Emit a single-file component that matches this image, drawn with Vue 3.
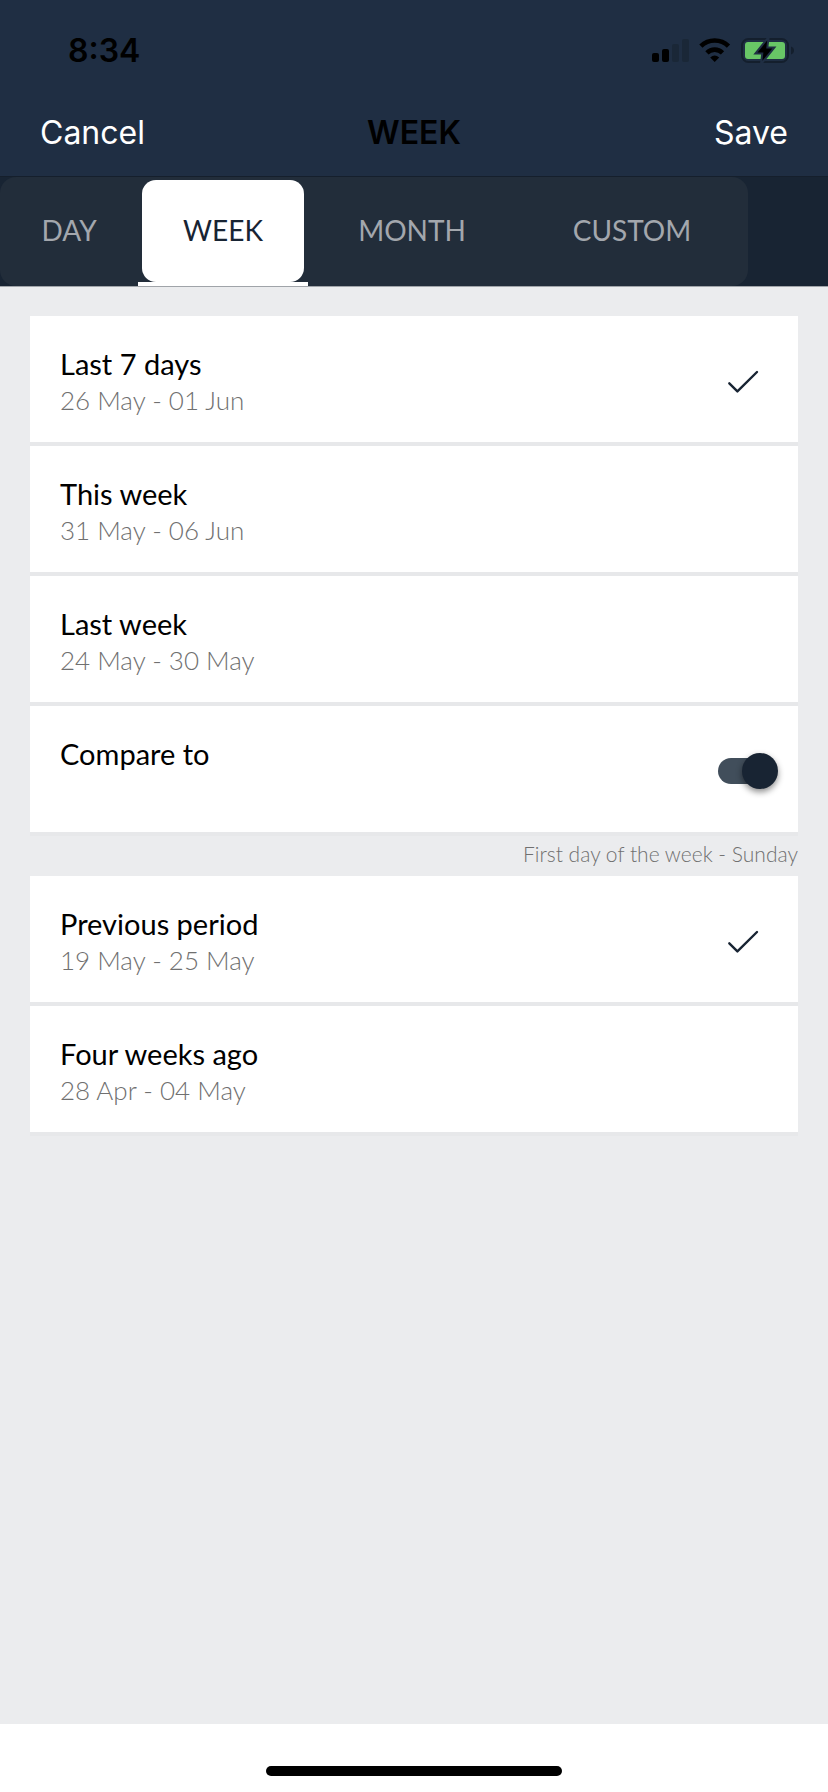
<script setup>
import { ref } from 'vue'

const tabs = ['Day', 'Week', 'Month', 'Custom']
const activeTab = ref('Week')

const periods = [
  { id: 'last7', title: 'Last 7 days', range: '26 May - 01 Jun' },
  { id: 'this', title: 'This week', range: '31 May - 06 Jun' },
  { id: 'last', title: 'Last week', range: '24 May - 30 May' },
]
const comparisons = [
  { id: 'previous', title: 'Previous period', range: '19 May - 25 May' },
  { id: 'four', title: 'Four weeks ago', range: '28 Apr - 04 May' },
]

const period = ref('last7')
const comparison = ref('previous')
const compare = ref(true)
</script>

<template>
  <div class="screen">
    <header class="header">
      <div class="status">
        <span class="clock">8:34</span>
        <div class="indicators">
          <svg width="37" height="25" viewBox="0 0 37 25" aria-hidden="true">
            <rect x="0" y="15" width="7" height="9" rx="2" />
            <rect x="10" y="11" width="7" height="13" rx="2" />
            <rect class="dim" x="20" y="6" width="7" height="18" rx="2" />
            <rect class="dim" x="30" y="1" width="7" height="23" rx="2" />
          </svg>
          <svg width="32" height="25" viewBox="0 0 32 25" aria-hidden="true">
            <path class="wave" d="M1.9 8.2A19.5 19.5 0 0 1 29.5 8.2" />
            <path class="wave" d="M7.9 14.9A11 11 0 0 1 23.5 14.9" />
            <path d="M11.2 19.5Q15.7 15.3 20.2 19.5L15.7 24Z" />
          </svg>
          <svg width="53" height="25" viewBox="0 0 53 25" aria-hidden="true">
            <rect class="shell" x="1" y="1" width="46" height="23" rx="6.5" />
            <path class="nub" d="M50 8.5Q53 9.6 53 12.5T50 16.5Z" />
            <rect class="charge" x="4" y="4" width="40" height="17" rx="3" />
            <path class="bolt" d="M26.2 2.5L16.5 14.6H22.4L21.4 22.8L31.3 10.4H25.2Z" />
          </svg>
        </div>
      </div>
      <nav class="nav">
        <button type="button" class="action">Cancel</button>
        <h1 class="heading">WEEK</h1>
        <button type="button" class="action end">Save</button>
      </nav>
    </header>

    <div class="tabbar">
      <div class="tabs" role="tablist">
        <button
          v-for="tab in tabs"
          :key="tab"
          type="button"
          role="tab"
          class="tab"
          :class="{ active: tab === activeTab }"
          :aria-selected="tab === activeTab"
          @click="activeTab = tab"
        >
          <span class="pill">{{ tab.toUpperCase() }}</span>
        </button>
      </div>
    </div>

    <main class="content">
      <label v-for="p in periods" :key="p.id" class="row">
        <span class="text">
          <span class="title">{{ p.title }}</span>
          <span class="range">{{ p.range }}</span>
        </span>
        <span class="choice">
          <input v-model="period" type="radio" name="period" :value="p.id" />
          <svg v-if="period === p.id" width="32" height="28" viewBox="0 0 32 28" aria-hidden="true">
            <path class="check" d="M2.3 16.3L10.4 24.4L30 5" />
          </svg>
        </span>
      </label>

      <label class="row switch-row">
        <span class="text">
          <span class="title">Compare to</span>
        </span>
        <input v-model="compare" class="switch" type="checkbox" role="switch" />
      </label>

      <p class="note">First day of the week - Sunday</p>

      <label v-for="c in comparisons" :key="c.id" class="row">
        <span class="text">
          <span class="title">{{ c.title }}</span>
          <span class="range">{{ c.range }}</span>
        </span>
        <span class="choice">
          <input v-model="comparison" type="radio" name="comparison" :value="c.id" />
          <svg v-if="comparison === c.id" width="32" height="28" viewBox="0 0 32 28" aria-hidden="true">
            <path class="check" d="M2.3 16.3L10.4 24.4L30 5" />
          </svg>
        </span>
      </label>
    </main>

    <footer class="footer"><div class="home"></div></footer>
  </div>
</template>

<style>
body {
  margin: 0;
}
</style>

<style scoped>
.screen {
  display: flex;
  flex-direction: column;
  min-height: 100vh;
  background: #ebecee;
  font-family: Lato, "Liberation Sans", sans-serif;
}
button {
  padding: 0;
  border: 0;
  background: none;
  font: inherit;
  cursor: pointer;
}
.header {
  background: #1f2e43;
  border-bottom: 1px solid #151f2c;
  font-family: Inter, "Liberation Sans", sans-serif;
}
.status {
  display: flex;
  align-items: center;
  justify-content: space-between;
  box-sizing: border-box;
  height: 88px;
  padding: 12px 34px 0 68px;
}
.clock {
  font-size: 32px;
  font-weight: 600;
}
.indicators {
  display: flex;
  gap: 10px;
}
.indicators svg {
  display: block;
}
.dim {
  fill: #1a2737;
}
.wave {
  fill: none;
  stroke: #000;
  stroke-width: 4.6;
}
.shell {
  fill: none;
  stroke: #141f2d;
  stroke-width: 2;
}
.nub {
  fill: #141f2d;
}
.charge {
  fill: #68c666;
}
.bolt {
  fill: #000;
  stroke: #1f2e43;
  stroke-width: 4;
  paint-order: stroke;
}
.nav {
  display: grid;
  grid-template-columns: 1fr auto 1fr;
  align-items: center;
  height: 88px;
  padding: 0 40px;
}
.action {
  justify-self: start;
  color: #fff;
  font-size: 32px;
}
.action.end {
  justify-self: end;
}
.heading {
  margin: 0;
  color: #000;
  font-size: 32px;
  font-weight: 600;
}
.tabbar {
  display: flex;
  background: #182433;
  border-bottom: 1px solid #a0a4a9;
}
.tabs {
  display: grid;
  grid-template-columns: 138px 170px 208px 232px;
  height: 109px;
  border-radius: 16px;
  background: #222d3a;
}
.tab {
  display: flex;
  box-sizing: border-box;
  padding: 3px 4px 0;
  border-bottom: 4px solid transparent;
  color: #a3a7ad;
  font-size: 28px;
}
.pill {
  display: flex;
  flex: 1;
  align-items: center;
  justify-content: center;
  box-sizing: border-box;
  height: 102px;
  padding-bottom: 2px;
  border-radius: 14px;
}
.tab.active {
  border-bottom-color: #fff;
  color: #182433;
}
.active .pill {
  background: #fff;
}
.content {
  flex: 1;
  padding: 29px 30px;
}
.row {
  display: flex;
  align-items: center;
  justify-content: space-between;
  box-sizing: border-box;
  min-height: 130px;
  padding: 0 39px 0 30px;
  background: #fff;
  box-shadow: inset 0 -4px #e7e8ea;
  cursor: pointer;
}
.switch-row {
  padding-right: 20px;
}
.text {
  display: flex;
  flex-direction: column;
  min-height: 72px;
  padding-top: 2px;
}
.title {
  color: #000;
  font-size: 29px;
  line-height: 36px;
}
.range {
  color: #707070;
  font-size: 26px;
  font-weight: 300;
  line-height: 36px;
}
.choice {
  display: grid;
  width: 32px;
  height: 28px;
}
.choice > * {
  grid-area: 1 / 1;
}
.choice input {
  appearance: none;
  width: 32px;
  height: 28px;
  margin: 0;
}
.check {
  fill: none;
  stroke: #182433;
  stroke-width: 2.4;
  stroke-linecap: round;
  stroke-linejoin: round;
}
.switch {
  appearance: none;
  display: grid;
  align-items: center;
  width: 60px;
  height: 36px;
  margin: 0;
}
.switch::before,
.switch::after {
  content: "";
  grid-area: 1 / 1;
}
.switch::before {
  width: 56px;
  height: 26px;
  border-radius: 13px;
  background: #b4b9be;
}
.switch::after {
  width: 36px;
  height: 36px;
  border-radius: 50%;
  background: #fff;
  box-shadow: 0 3px 6px rgba(0, 0, 0, 0.45);
}
.switch:checked::before {
  background: #414e5b;
}
.switch:checked::after {
  justify-self: end;
  background: #182433;
}
.note {
  margin: 0;
  padding-bottom: 4px;
  color: #707070;
  font-size: 21px;
  font-weight: 300;
  line-height: 36px;
  text-align: right;
}
.footer {
  display: flex;
  justify-content: center;
  align-items: flex-end;
  box-sizing: border-box;
  height: 68px;
  padding-bottom: 16px;
  background: #fff;
}
.home {
  width: 296px;
  height: 10px;
  border-radius: 5px;
  background: #000;
}
</style>
